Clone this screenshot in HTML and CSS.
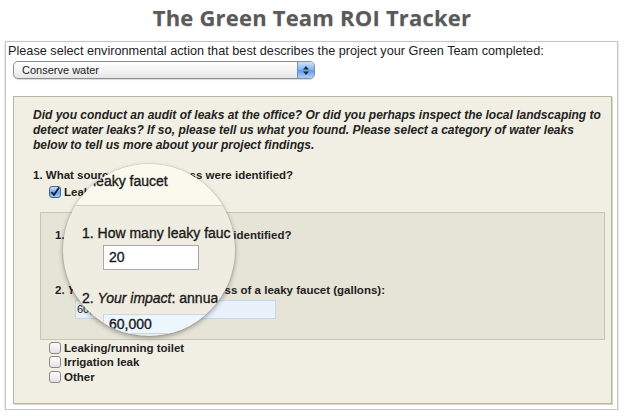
FILE: index.html
```html
<!DOCTYPE html>
<html lang="en">
<head>
    <meta charset="UTF-8">
    <meta name="viewport" content="width=device-width, initial-scale=1.0">
    <title>The Green Team ROI Tracker</title>
    <link rel="stylesheet" href="styles.css">
</head>
<body>

<h1 class="title">The Green Team ROI Tracker</h1>

<div class="tracker">
    <div class="prompt">Please select environmental action that best describes the project your Green Team completed:</div>
    <div class="select">
        <span class="select-value">Conserve water</span>
        <span class="stepper">
            <svg width="8" height="11" viewBox="0 0 8 11"><path d="M4 1 L7 4.5 H1 Z M4 10 L7 6.5 H1 Z" fill="#1d2a3a"/></svg>
        </span>
    </div>

    <div class="panel">
        <p class="intro">Did you conduct an audit of leaks at the office? Or did you perhaps inspect the local landscaping to detect water leaks? If so, please tell us what you found. Please select a category of water leaks below to tell us more about your project findings.</p>

        <div class="question">1. What source(s) of water loss were identified?</div>
        <ul class="choices first">
            <li><span class="check checked"><svg width="10" height="10" viewBox="0 0 10 10"><path d="M1.5 5 L4 8 L9 0.5" fill="none" stroke="#0d1f33" stroke-width="1.8"/></svg></span>Leaky faucet</li>
        </ul>

        <div class="subpanel">
            <div class="subq">1. How many leaky faucets were identified?</div>
            <div class="field short">20</div>
            <div class="subq second">2. <i>Your impact</i>: annual water loss of a leaky faucet (gallons):</div>
            <div class="field readonly">60,000</div>
        </div>

        <ul class="choices">
            <li><span class="check"></span>Leaking/running toilet</li>
            <li><span class="check"></span>Irrigation leak</li>
            <li><span class="check"></span>Other</li>
        </ul>
    </div>
</div>

<!-- magnifier over the leaky faucet questions -->
<div class="lens">
    <div class="lens-top"></div>
    <div class="lens-text lens-choice">leaky faucet</div>
    <div class="lens-text lens-q1">1. How many leaky fauc</div>
    <div class="lens-field lens-f1">20</div>
    <div class="lens-text lens-q2">2. <i>Your impact</i>: annua</div>
    <div class="lens-field lens-f2">60,000</div>
</div>

</body>
</html>
```

FILE: styles.css
```css
body {
    margin: 0;
    padding: 0;
    background: #fff;
    font-family: 'Liberation Sans', Arial, sans-serif;
    color: #222;
    position: relative;
}
.title {
    margin: 0;
    padding: 3px 0 0;
    height: 37px;
    box-sizing: border-box;
    text-align: center;
    font-family: 'Open Sans', 'Lato', sans-serif;
    font-size: 22px;
    line-height: 28px;
    letter-spacing: 0.2px;
    font-weight: bold;
    color: #5a5a5a;
    text-shadow: 0 1px 1px rgba(0, 0, 0, 0.15);
}
.tracker {
    margin: 4px 6px 0 5px;
    height: 367px;
    border: 1px solid #c4c4c4;
    box-shadow: 0 1px 2px rgba(0, 0, 0, 0.25);
    background: #fff;
    padding: 0 5px 0 7px;
}
.prompt {
    padding: 2px 0 0 2px;
    margin-left: -7px;
    font-size: 12.7px;
    line-height: 15px;
}
.select {
    display: flex;
    align-items: center;
    margin-top: 2px;
    width: 300px;
    height: 16px;
    border: 1px solid #8d8d8d;
    border-radius: 5px;
    background: linear-gradient(#ffffff, #f4f4f4 50%, #e6e6e6);
    box-shadow: 0 1px 1px rgba(0, 0, 0, 0.15);
    overflow: hidden;
}
.select-value {
    flex: 1;
    padding-left: 8px;
    font-size: 11px;
}
.stepper {
    display: flex;
    align-items: center;
    justify-content: center;
    width: 16px;
    height: 16px;
    border-left: 1px solid #6f8fb8;
    background: linear-gradient(#cfe3fb, #7fb1ee 50%, #5c9ae6 51%, #a9d0fb);
}
.panel {
    margin-top: 17px;
    height: 306px;
    border: 1px solid #b7b4a2;
    background: #f1efe3;
    box-shadow: 1px 1px 0 #d8d6cc;
    padding: 0 6px 0 19px;
}
.intro {
    margin: 11px 0 0;
    font-size: 12px;
    line-height: 15px;
    font-weight: bold;
    font-style: italic;
    color: #222;
}
.question {
    margin-top: 15px;
    font-size: 11.5px;
    line-height: 15px;
    font-weight: bold;
}
.choices {
    list-style: none;
    margin: 0;
    padding: 0 0 0 16px;
    font-size: 11.5px;
    font-weight: bold;
}
.choices.first {
    margin-top: 2px;
}
.choices li {
    display: flex;
    align-items: center;
    height: 14.5px;
}
.check {
    display: flex;
    align-items: center;
    justify-content: center;
    width: 10px;
    height: 10px;
    margin-right: 3px;
    border: 1px solid #8a8a8a;
    border-radius: 3px;
    background: linear-gradient(#fdfdfd, #e2e2e2);
}
.check.checked {
    border-color: #40648f;
    background: linear-gradient(#d4e6fb, #6aa7ec 55%, #9cc9f8);
}
.subpanel {
    margin: 12px 0 1px 7px;
    height: 128px;
    border: 1px solid #c8c5b3;
    background: #e6e4d7;
    padding: 0 0 0 14px;
    box-sizing: border-box;
    font-size: 11.5px;
    font-weight: bold;
}
.subq {
    margin-top: 15px;
    line-height: 15px;
}
.subq.second {
    margin-top: 19px;
}
.field {
    margin: 2px 0 0 20px;
    height: 17px;
    border: 1px solid #b8b8b8;
    background: #fff;
    font-weight: normal;
    font-size: 11px;
    line-height: 17px;
    padding-left: 1px;
}
.field.short {
    width: 70px;
}
.field.readonly {
    width: 198px;
    border-color: #c9d8e6;
    background: #e9f2fc;
}

/* magnifier */
.lens {
    position: absolute;
    left: 63px;
    top: 164px;
    width: 172px;
    height: 172px;
    border-radius: 50%;
    overflow: hidden;
    background: #efede1;
    box-shadow: 0 2px 5px rgba(0, 0, 0, 0.35), 0 0 0 1px rgba(0, 0, 0, 0.06);
}
.lens-top {
    position: absolute;
    left: 0;
    top: 0;
    width: 100%;
    height: 41px;
    background: #fbf9ee;
    border-bottom: 1px solid #d3d0c0;
}
.lens-text {
    position: absolute;
    white-space: nowrap;
    font-size: 14px;
    line-height: 20px;
    color: #1a1a1a;
    -webkit-text-stroke: 0.35px #1a1a1a;
}
.lens-choice {
    left: 30px;
    top: 7px;
}
.lens-q1 {
    left: 19px;
    top: 59px;
}
.lens-q2 {
    left: 19px;
    top: 124px;
}
.lens-field {
    position: absolute;
    left: 40px;
    padding-left: 5px;
    box-sizing: border-box;
    font-size: 14px;
    color: #1a1a1a;
    -webkit-text-stroke: 0.35px #1a1a1a;
}
.lens-f1 {
    top: 81px;
    width: 96px;
    height: 25px;
    line-height: 23px;
    border: 1px solid #a9a9a9;
    background: #fff;
}
.lens-f2 {
    top: 150px;
    width: 200px;
    height: 20px;
    line-height: 18px;
    border: 1px solid #c9d8e6;
    background: #eef6fd;
}
```
